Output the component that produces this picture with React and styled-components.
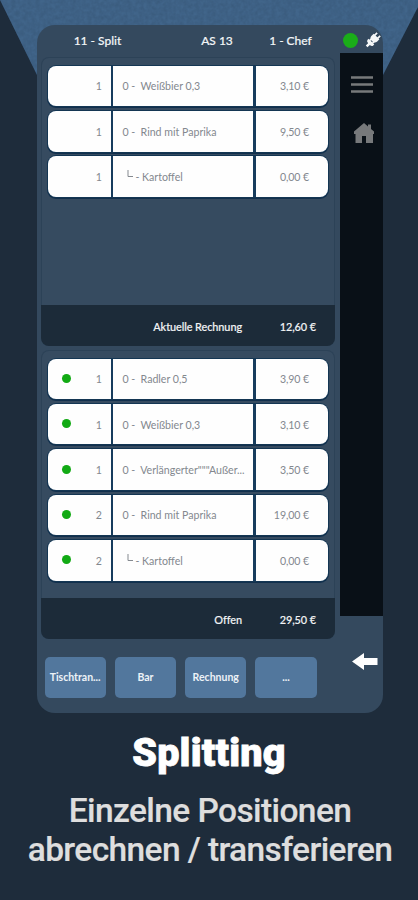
import React from "react";
import styled, { createGlobalStyle } from "styled-components";

const GlobalStyle = createGlobalStyle`
  * { box-sizing: border-box; }
  html, body { margin: 0; padding: 0; background: #1e2c3b; }
`;

const Page = styled.main`
  position: relative;
  width: 418px;
  height: 900px;
  overflow: hidden;
  padding: 25px 35px 0 37px;
  background: #1e2c3b;
  font-family: Lato, sans-serif;
`;

const Backdrop = styled.svg`
  position: absolute;
  top: 0;
  left: 0;
`;

const Device = styled.section`
  position: relative;
  width: 346px;
  height: 688px;
  border-radius: 18px;
  overflow: hidden;
  background: #34495e;
  display: flex;
  flex-direction: column;
`;

const Header = styled.header`
  height: 28px;
  flex: none;
  display: grid;
  grid-template-columns: 121px 118px 61px 28px 18px;
  align-items: center;
  padding-top: 2px;
  color: #f2f5f7;
  font-size: 12px;
  font-weight: 500;
  white-space: nowrap;
`;

const HeaderText = styled.span`
  justify-self: center;
  transform: translateX(${(p) => p.$shift || 0}px);
  -webkit-text-stroke: 0.15px currentColor;
`;

const OnlineDot = styled.i`
  width: 15px;
  height: 15px;
  border-radius: 50%;
  background: #1aad19;
  margin-left: 5.5px;
`;

const Content = styled.div`
  height: 563px;
  flex: none;
  display: grid;
  grid-template-columns: 303px 43px;
  grid-template-rows: 563px;
`;

const Panels = styled.div`
  padding: 4px 5px 0 4px;
  display: flex;
  flex-direction: column;
  gap: 4px;
`;

const Panel = styled.section`
  width: 294px;
  height: 289px;
  flex: none;
  display: flex;
  flex-direction: column;
  justify-content: space-between;
  border-radius: 8px;
  background: #364b60;
  box-shadow: inset 0 0 0 1px #2c4257;
  overflow: hidden;
`;

const Rows = styled.div`
  display: flex;
  flex-direction: column;
  gap: 4.8px;
  padding: ${(p) => p.$top}px 7px 0 7px;
`;

const Row = styled.div`
  height: 40.6px;
  display: grid;
  grid-template-columns: 63px 140px 1fr;
  gap: 2.4px;
  border-radius: 8px;
  overflow: hidden;
  background: #173c5d;
  box-shadow: 0 0 0 1px #143653, 0 1px 0 1px #12304d;
  color: #83888e;
  font-size: 10.6px;
  white-space: nowrap;
`;

const Cell = styled.div`
  display: flex;
  align-items: center;
  min-width: 0;
  padding-top: 1px;
  background: #fefefe;
`;

const Quantity = styled(Cell)`
  justify-content: space-between;
  padding-left: 14px;
  padding-right: 9px;
`;

const Marker = styled.i`
  width: 9px;
  height: 9px;
  border-radius: 50%;
  background: ${(p) => (p.$on ? "#12aa14" : "transparent")};
  transform: translateY(-1px);
`;

const Name = styled(Cell)`
  padding-left: ${(p) => (p.$child ? 14 : 9)}px;
  white-space: pre;
`;

const Price = styled(Cell)`
  justify-content: flex-end;
  padding-right: 19px;
  letter-spacing: -0.1px;
`;

const Branch = styled.svg`
  margin: -6px 2px 0 0;
`;

const Total = styled.footer`
  height: 41px;
  flex: none;
  display: grid;
  grid-template-columns: 201px 74px;
  align-items: center;
  padding-top: 1px;
  background: #1c2b39;
  color: #f2f4f6;
  font-size: 10.9px;
  font-weight: 500;
  text-align: right;
  letter-spacing: -0.08px;
  -webkit-text-stroke: 0.15px currentColor;
`;

const Sidebar = styled.aside`
  background: #091017;
  display: flex;
  flex-direction: column;
  align-items: center;
`;

const MenuIcon = styled.svg`
  margin-top: 22px;
`;

const HomeIcon = styled.svg`
  margin: 28px 0 0 4px;
`;

const Actions = styled.nav`
  position: relative;
  flex: 1;
  display: flex;
  align-items: flex-start;
  gap: 9px;
  padding: 41px 0 0 7.5px;
`;

const ActionButton = styled.button`
  width: 61.3px;
  height: 40.5px;
  padding: 0;
  border: 0;
  border-radius: 5px;
  background: #52779d;
  color: #edf2f7;
  font: 700 10.5px Lato, sans-serif;
  white-space: nowrap;
`;

const BackIcon = styled.svg`
  margin: -5px 0 0 26px;
`;

const Caption = styled.section`
  position: relative;
  width: 346px;
  text-align: center;
  font-family: Roboto, sans-serif;
  white-space: nowrap;
`;

const Title = styled.h1`
  margin: 16px 0 0 -2px;
  color: #fff;
  font-size: 39.5px;
  line-height: 48px;
  font-weight: 900;
  letter-spacing: 0.2px;
  -webkit-text-stroke: 0.8px #fff;
`;

const Subtitle = styled.p`
  margin: 15px -20px 0;
  color: #dedede;
  font-size: 33.5px;
  line-height: 38.7px;
  font-weight: 500;
  letter-spacing: -0.6px;
  -webkit-text-stroke: 0.2px #dedede;
`;

const billItems = [
  { qty: 1, name: "0 -  Weißbier 0,3", price: "3,10 €" },
  { qty: 1, name: "0 -  Rind mit Paprika", price: "9,50 €" },
  { qty: 1, name: "- Kartoffel", price: "0,00 €", child: true },
];

const openItems = [
  { qty: 1, name: "0 -  Radler 0,5", price: "3,90 €" },
  { qty: 1, name: "0 -  Weißbier 0,3", price: "3,10 €" },
  { qty: 1, name: '0 -  Verlängerter"""Außer...', price: "3,50 €" },
  { qty: 2, name: "0 -  Rind mit Paprika", price: "19,00 €" },
  { qty: 2, name: "- Kartoffel", price: "0,00 €", child: true },
];

function OrderPanel({ items, top, marked, label, total }) {
  return (
    <Panel>
      <Rows $top={top}>
        {items.map((item, i) => (
          <Row key={i}>
            <Quantity>
              <Marker $on={marked} />
              <span>{item.qty}</span>
            </Quantity>
            <Name $child={item.child}>
              {item.child && (
                <Branch width="6" height="8" viewBox="0 0 6 8">
                  <path d="M1 0v6.5h5" fill="none" stroke="#858a90" />
                </Branch>
              )}
              {item.name}
            </Name>
            <Price>{item.price}</Price>
          </Row>
        ))}
      </Rows>
      <Total>
        <span>{label}</span>
        <span>{total}</span>
      </Total>
    </Panel>
  );
}

export default function App() {
  return (
    <>
      <GlobalStyle />
      <Page>
        <Backdrop width="418" height="80" viewBox="0 0 418 80">
          <defs>
            <filter id="grain" x="0" y="0" width="100%" height="100%" colorInterpolationFilters="sRGB">
              <feTurbulence type="fractalNoise" baseFrequency="0.25" numOctaves="2" seed="4" />
              <feColorMatrix values="0 0 0 0 0.15  0 0 0 0 0.25  0 0 0 0 0.35  0.4 0 0 0 -0.1" />
              <feComposite in2="SourceGraphic" operator="in" />
              <feMerge>
                <feMergeNode in="SourceGraphic" />
                <feMergeNode />
              </feMerge>
            </filter>
          </defs>
          <path d="M0 0H418V7L383 75H37Z" fill="#41658a" filter="url(#grain)" />
        </Backdrop>
        <Device>
          <Header>
            <HeaderText>11 - Split</HeaderText>
            <HeaderText>AS 13</HeaderText>
            <HeaderText $shift={-16}>1 - Chef</HeaderText>
            <OnlineDot />
            <svg width="16" height="16" viewBox="0 0 16 16">
              <g transform="rotate(45 8 8)" fill="#f5f7f8">
                <path d="M4 3h8v3a4 3.5 0 0 1-8 0Z" />
                <path d="M5 0h1.7v4H5ZM9.3 0H11v4H9.3Z" />
                <path d="M4 10.2h8v1.5a3 2 0 0 1-2.8 2V17H6.8v-3.3a3 2 0 0 1-2.8-2Z" />
                <path d="M5.3 8h1.5v3H5.3ZM9.2 8h1.5v3H9.2Z" />
              </g>
            </svg>
          </Header>
          <Content>
            <Panels>
              <OrderPanel items={billItems} top={8.6} label="Aktuelle Rechnung" total="12,60 €" />
              <OrderPanel items={openItems} top={8.5} marked label="Offen" total="29,50 €" />
            </Panels>
            <Sidebar>
              <MenuIcon width="24" height="19" viewBox="0 0 24 19">
                <path d="M1 2.5h22M1 9.5h22M1 16.5h22" stroke="#77797b" strokeWidth="2.5" />
              </MenuIcon>
              <HomeIcon width="22" height="22" viewBox="0 0 22 22">
                <path d="M11 1 1 9.5V12h1.5v9H9v-7h4v7h7v-9h1V9.5L18 7V2.5h-3V4.4Z" fill="#77797b" />
              </HomeIcon>
            </Sidebar>
          </Content>
          <Actions>
            <ActionButton>Tischtran...</ActionButton>
            <ActionButton>Bar</ActionButton>
            <ActionButton>Rechnung</ActionButton>
            <ActionButton>...</ActionButton>
            <BackIcon width="26" height="19" viewBox="0 0 26 19">
              <path d="M0 9.5 12 1v5h13.5v7H12v5Z" fill="#fff" />
            </BackIcon>
          </Actions>
        </Device>
        <Caption>
          <Title>Splitting</Title>
          <Subtitle>
            Einzelne Positionen
            <br />
            abrechnen / transferieren
          </Subtitle>
        </Caption>
      </Page>
    </>
  );
}
